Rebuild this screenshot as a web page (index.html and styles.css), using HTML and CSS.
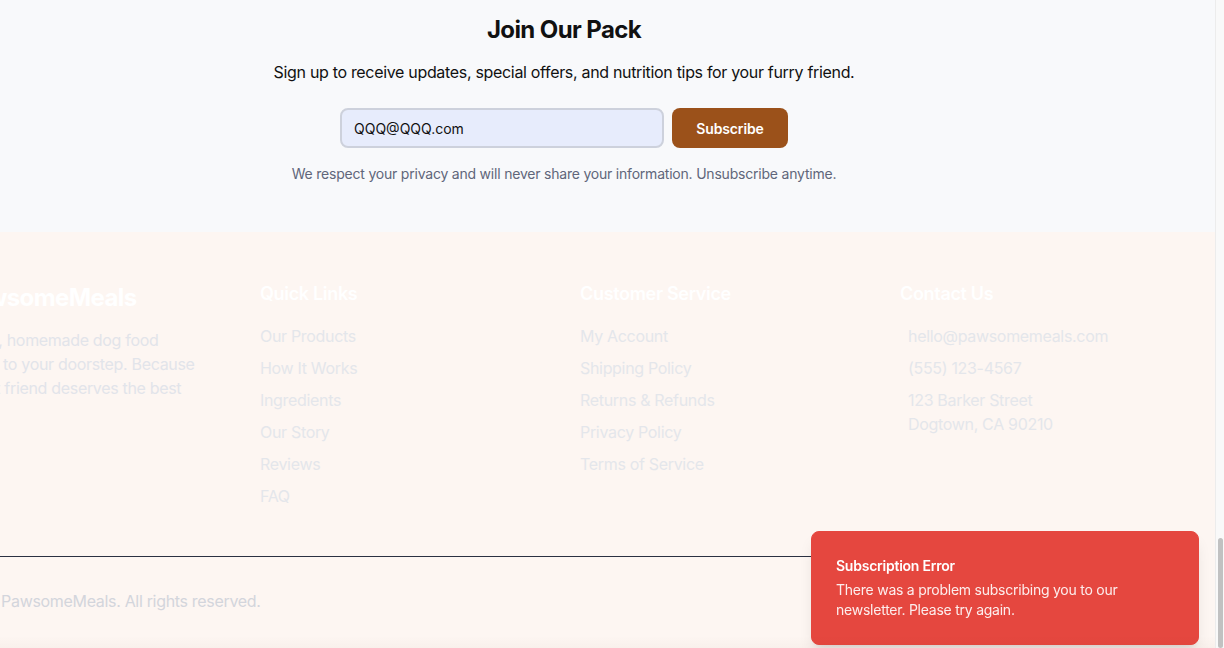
FILE: index.html
```html
<!DOCTYPE html>
<html lang="en">
<head>
<meta charset="utf-8">
<title>PawsomeMeals</title>
<link rel="stylesheet" href="styles.css">
</head>
<body>
<div class="page">
  <section class="newsletter">
    <div class="newsletter-inner">
      <h2 class="nl-title">Join Our Pack</h2>
      <p class="nl-sub">Sign up to receive updates, special offers, and nutrition tips for your furry friend.</p>
      <form class="nl-form">
        <input class="nl-input" type="email" value="QQQ@QQQ.com">
        <button class="nl-btn" type="button">Subscribe</button>
      </form>
      <p class="nl-note">We respect your privacy and will never share your information. Unsubscribe anytime.</p>
    </div>
  </section>
  <footer class="footer">
    <div class="footer-inner">
      <div class="footer-grid">
        <div class="col">
          <div class="brand">
            <svg class="brand-icon" width="14" height="14" viewBox="0 0 24 24" fill="#ffffff"><circle cx="6" cy="9" r="2.2"/><circle cx="10" cy="5.5" r="2.2"/><circle cx="14" cy="5.5" r="2.2"/><circle cx="18" cy="9" r="2.2"/><path d="M12 11c-3 0-6 4-6 7 0 2 2 2.5 3 2.5s2-.8 3-.8 2 .8 3 .8 3-.5 3-2.5c0-3-3-7-6-7z"/></svg>
            <span class="brand-name">PawsomeMeals</span>
          </div>
          <p class="brand-text">Delicious, homemade dog food delivered to your doorstep. Because your best friend deserves the best</p>
        </div>
        <div class="col">
          <h3 class="col-title">Quick Links</h3>
          <ul class="links">
            <li>Our Products</li>
            <li>How It Works</li>
            <li>Ingredients</li>
            <li>Our Story</li>
            <li>Reviews</li>
            <li>FAQ</li>
          </ul>
        </div>
        <div class="col">
          <h3 class="col-title">Customer Service</h3>
          <ul class="links">
            <li>My Account</li>
            <li>Shipping Policy</li>
            <li>Returns &amp; Refunds</li>
            <li>Privacy Policy</li>
            <li>Terms of Service</li>
          </ul>
        </div>
        <div class="col">
          <h3 class="col-title">Contact Us</h3>
          <ul class="links contact">
            <li>hello@pawsomemeals.com</li>
            <li>(555) 123-4567</li>
            <li>123 Barker Street<br>Dogtown, CA 90210</li>
          </ul>
        </div>
      </div>
      <div class="footer-bottom">
        <p class="copyright">© 2024 PawsomeMeals. All rights reserved.</p>
      </div>
    </div>
  </footer>
</div>
<div class="toast">
  <div class="toast-title">Subscription Error</div>
  <div class="toast-desc">There was a problem subscribing you to our newsletter. Please try again.</div>
</div>
<div class="bottom-band"></div>
<div class="scrollbar"><div class="thumb"></div></div>
</body>
</html>
```
FILE: styles.css
```css
* { box-sizing: border-box; }
html, body {
  margin: 0;
  padding: 0;
  width: 1224px;
  height: 648px;
  overflow: hidden;
  font-family: Inter, "Noto Sans", sans-serif;
  letter-spacing: -0.02em;
}
.page {
  width: 1215px;
  height: 648px;
  overflow: hidden;
}
.newsletter {
  background: #f8f9fb;
  padding: 14px 0 48px;
}
.newsletter-inner {
  width: 1128px;
  text-align: center;
}
.nl-title {
  margin: 0 0 14px;
  font-size: 24px;
  line-height: 32px;
  font-weight: 700;
  color: #111111;
  letter-spacing: -0.025em;
}
.nl-sub {
  margin: 0 0 24px;
  font-size: 16px;
  line-height: 24px;
  color: #111111;
}
.nl-form {
  width: 448px;
  margin: 0 auto 16px;
  display: flex;
  gap: 8px;
}
.nl-input {
  flex: 1;
  min-width: 0;
  height: 40px;
  border: 2px solid #cdd1dc;
  border-radius: 8px;
  background: #e7ecfc;
  padding: 0 12px;
  font-family: Inter, sans-serif;
  font-size: 14px;
  color: #111111;
  outline: none;
}
.nl-btn {
  height: 40px;
  width: 116px;
  padding: 0;
  border: none;
  border-radius: 8px;
  background: #9b511a;
  color: #ffffff;
  font-family: Inter, sans-serif;
  font-size: 14px;
  font-weight: 600;
  letter-spacing: -0.01em;
}
.nl-note {
  margin: 0;
  font-size: 14px;
  line-height: 20px;
  color: #60667a;
  letter-spacing: -0.015em;
}
.footer {
  background: #fdf6f2;
  padding: 48px 0 35px;
  height: 416px;
}
.footer-inner {
  width: 1248px;
  margin-left: -60px;
}
.footer-grid {
  display: grid;
  grid-template-columns: repeat(4, 1fr);
  gap: 32px;
}
.brand {
  display: flex;
  align-items: center;
  gap: 5px;
  margin: 2px 0 14px;
}
.brand-name {
  font-size: 24px;
  line-height: 32px;
  font-weight: 700;
  color: #ffffff;
  letter-spacing: -0.025em;
}
.brand-text {
  margin: 0 0 0 -8px;
  font-size: 16px;
  line-height: 24px;
  color: #e2e4ea;
}
.col-title {
  margin: 0 0 16px;
  font-size: 18px;
  line-height: 28px;
  font-weight: 600;
  color: #ffffff;
}
.links {
  list-style: none;
  margin: 0;
  padding: 0;
  display: flex;
  flex-direction: column;
  gap: 8px;
  font-size: 16px;
  line-height: 24px;
  color: #e4e6eb;
}
.contact { padding-left: 8px; }
.footer-bottom {
  margin-top: 48px;
  border-top: 1px solid #2b3142;
  padding-top: 32px;
}
.copyright {
  margin: 0;
  font-size: 16px;
  line-height: 24px;
  color: #d3d5dc;
}
.toast {
  position: fixed;
  left: 811px;
  top: 531px;
  width: 388px;
  padding: 24px;
  background: #e5473f;
  border: 1px solid #e5473f;
  border-radius: 8px;
  box-shadow: 0 10px 15px -3px rgba(0,0,0,0.1), 0 4px 6px -4px rgba(0,0,0,0.1);
  color: #ffffff;
  display: flex;
  flex-direction: column;
  gap: 4px;
  letter-spacing: -0.015em;
}
.toast-title {
  font-size: 14px;
  line-height: 20px;
  font-weight: 600;
}
.toast-desc {
  font-size: 14px;
  line-height: 20px;
  opacity: 0.9;
}
.bottom-band {
  position: fixed;
  left: 0;
  bottom: 0;
  width: 1215px;
  height: 12px;
  background: linear-gradient(to bottom, rgba(120,60,40,0), rgba(120,60,40,0.03));
  pointer-events: none;
}
.scrollbar {
  position: fixed;
  right: 0;
  top: 0;
  width: 9px;
  height: 648px;
  background: #f9f9f9;
  border-left: 1px solid #ececec;
}
.thumb {
  position: absolute;
  left: 2px;
  top: 538px;
  width: 5px;
  height: 110px;
  border-radius: 3px;
  background: #c1c1c1;
}
```
